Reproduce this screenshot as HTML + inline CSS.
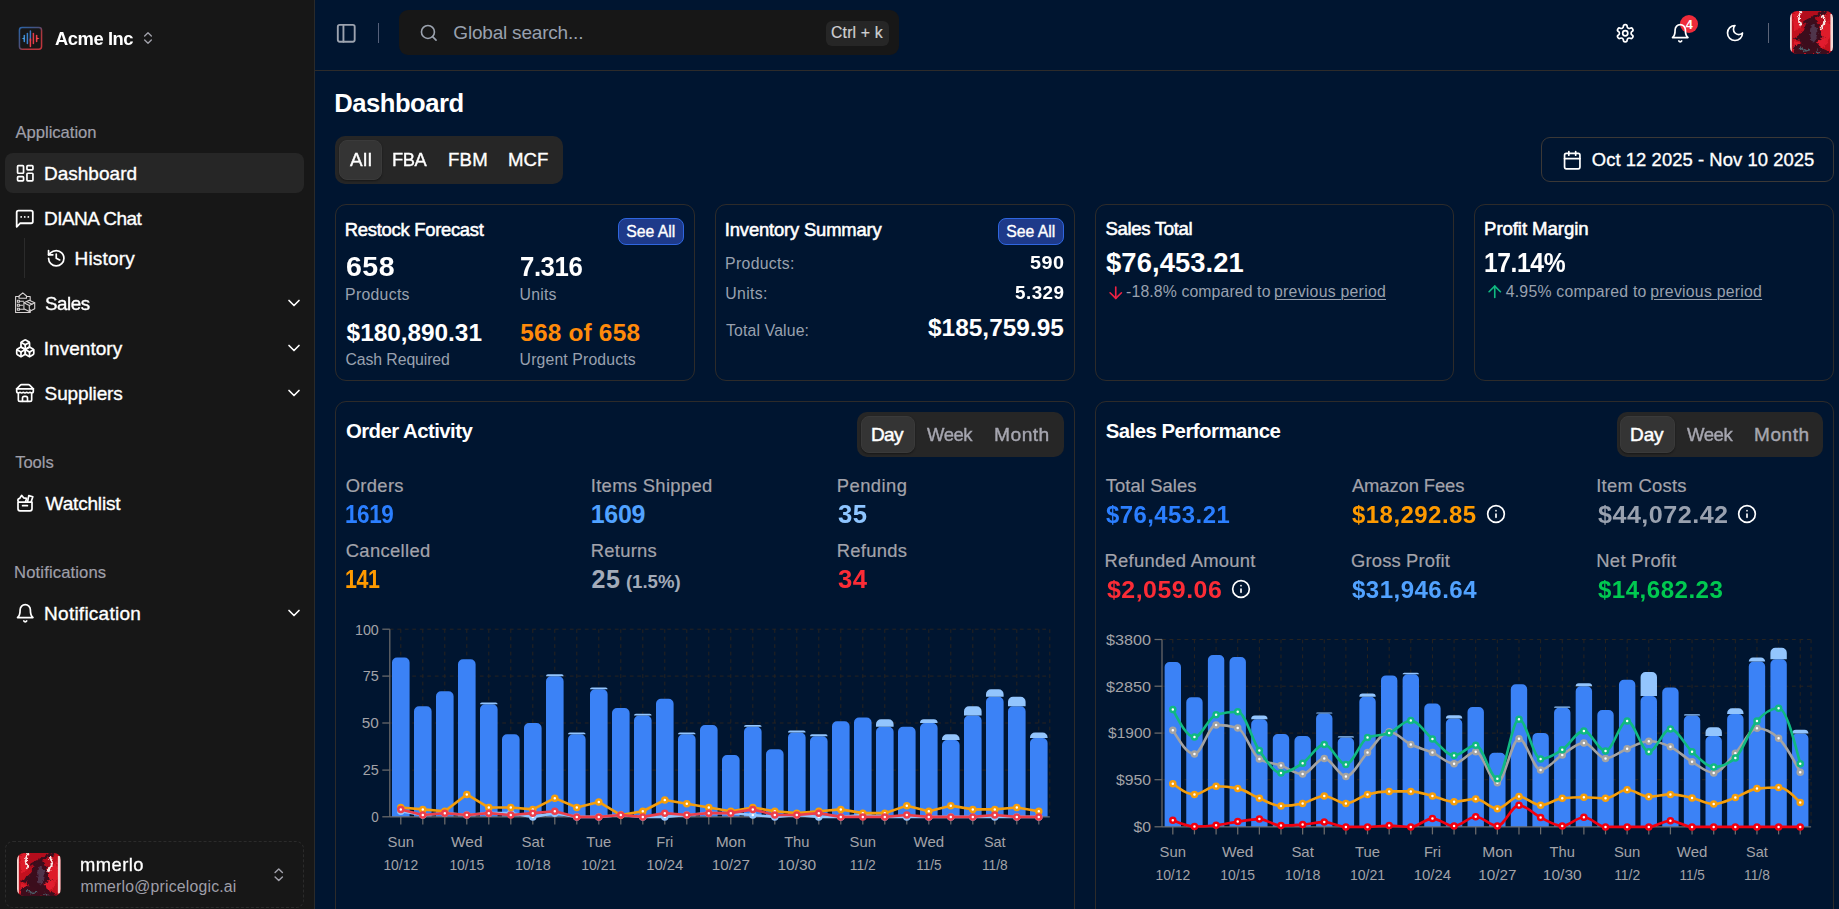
<!DOCTYPE html>
<html lang="en"><head><meta charset="utf-8"><title>Dashboard</title>
<style>
html,body{margin:0;padding:0}
body{width:1839px;height:909px;overflow:hidden;background:#001530;font-family:"Liberation Sans",sans-serif;position:relative}
.b,.t,.ic{position:absolute}
.t{white-space:pre;display:block}
.ic{display:block;overflow:hidden}
</style></head>
<body>
<div class="b" style="left:0px;top:0px;width:314px;height:909px;background:#171717;"></div>
<div class="b" style="left:314px;top:0px;width:1px;height:909px;background:#2a2a2a;"></div>
<div class="b" style="left:5px;top:153px;width:299px;height:40px;background:#262626;border-radius:8px;"></div>
<div class="b" style="left:24px;top:238px;width:1px;height:40px;background:#2b2b2b;"></div>
<div class="b" style="left:5px;top:841px;width:299px;height:67px;border:1px dashed #2b2b2b;border-radius:8px;box-sizing:border-box;"></div>
<div class="b" style="left:315px;top:70px;width:1524px;height:1px;background:#2d2b2a;"></div>
<div class="b" style="left:378px;top:23px;width:1px;height:20px;background:#55607a;"></div>
<div class="b" style="left:399px;top:10px;width:500px;height:45px;background:#171717;border-radius:9px;"></div>
<div class="b" style="left:826px;top:20.5px;width:63px;height:25.0px;background:#262626;border-radius:6px;"></div>
<div class="b" style="left:1768px;top:23px;width:1px;height:20px;background:#5b6478;"></div>
<div class="b" style="left:335px;top:136px;width:228px;height:48px;background:#262626;border-radius:10px;"></div>
<div class="b" style="left:339px;top:140px;width:43px;height:39.5px;background:#343434;border-radius:8px;box-shadow:0 1px 2px rgba(0,0,0,.4);border:1px solid #3a3a3a;box-sizing:border-box;"></div>
<div class="b" style="left:1541px;top:137px;width:293px;height:45px;border:1px solid #3b3836;border-radius:9px;box-sizing:border-box;"></div>
<div class="b" style="left:335px;top:204px;width:360px;height:177px;border:1px solid #2d2b2a;border-radius:11px;box-sizing:border-box;"></div>
<div class="b" style="left:715px;top:204px;width:360px;height:177px;border:1px solid #2d2b2a;border-radius:11px;box-sizing:border-box;"></div>
<div class="b" style="left:1095px;top:204px;width:359px;height:177px;border:1px solid #2d2b2a;border-radius:11px;box-sizing:border-box;"></div>
<div class="b" style="left:1474px;top:204px;width:360px;height:177px;border:1px solid #2d2b2a;border-radius:11px;box-sizing:border-box;"></div>
<div class="b" style="left:335px;top:401px;width:740px;height:529px;border:1px solid #2d2b2a;border-radius:11px;box-sizing:border-box;"></div>
<div class="b" style="left:1095px;top:401px;width:739px;height:529px;border:1px solid #2d2b2a;border-radius:11px;box-sizing:border-box;"></div>
<div class="b" style="left:618px;top:218.3px;width:66px;height:26.399999999999977px;background:#1e3a8a;border:1px solid #2f66e0;border-radius:8px;box-sizing:border-box;"></div>
<div class="b" style="left:998px;top:218.3px;width:66px;height:26.399999999999977px;background:#1e3a8a;border:1px solid #2f66e0;border-radius:8px;box-sizing:border-box;"></div>
<div class="b" style="left:857px;top:411.7px;width:207px;height:45.30000000000001px;background:#262626;border-radius:10px;"></div>
<div class="b" style="left:861.3px;top:416.3px;width:53.40000000000009px;height:36.39999999999998px;background:#343434;border-radius:8px;border:1px solid #3a3a3a;box-sizing:border-box;box-shadow:0 1px 2px rgba(0,0,0,.4);"></div>
<div class="b" style="left:1617px;top:411.7px;width:205.70000000000005px;height:45.30000000000001px;background:#262626;border-radius:10px;"></div>
<div class="b" style="left:1620.4px;top:416.3px;width:54.59999999999991px;height:36.39999999999998px;background:#343434;border-radius:8px;border:1px solid #3a3a3a;box-sizing:border-box;box-shadow:0 1px 2px rgba(0,0,0,.4);"></div>
<div class="b" style="left:1680.2px;top:15px;width:18.0px;height:18px;background:#ef2b3a;border-radius:9px;"></div>
<svg class="ic" style="left:0;top:0" width="1839" height="909" viewBox="0 0 1839 909">
<g stroke="#262320" stroke-width="1" stroke-dasharray="3.75 3.75"><line x1="389.8" x2="1049.8" y1="629.2" y2="629.2"/><line x1="389.8" x2="1049.8" y1="676.1" y2="676.1"/><line x1="389.8" x2="1049.8" y1="723.0" y2="723.0"/><line x1="389.8" x2="1049.8" y1="770.1" y2="770.1"/><line x1="400.80" x2="400.80" y1="629.2" y2="816.9"/><line x1="422.80" x2="422.80" y1="629.2" y2="816.9"/><line x1="444.80" x2="444.80" y1="629.2" y2="816.9"/><line x1="466.80" x2="466.80" y1="629.2" y2="816.9"/><line x1="488.80" x2="488.80" y1="629.2" y2="816.9"/><line x1="510.80" x2="510.80" y1="629.2" y2="816.9"/><line x1="532.80" x2="532.80" y1="629.2" y2="816.9"/><line x1="554.80" x2="554.80" y1="629.2" y2="816.9"/><line x1="576.80" x2="576.80" y1="629.2" y2="816.9"/><line x1="598.80" x2="598.80" y1="629.2" y2="816.9"/><line x1="620.80" x2="620.80" y1="629.2" y2="816.9"/><line x1="642.80" x2="642.80" y1="629.2" y2="816.9"/><line x1="664.80" x2="664.80" y1="629.2" y2="816.9"/><line x1="686.80" x2="686.80" y1="629.2" y2="816.9"/><line x1="708.80" x2="708.80" y1="629.2" y2="816.9"/><line x1="730.80" x2="730.80" y1="629.2" y2="816.9"/><line x1="752.80" x2="752.80" y1="629.2" y2="816.9"/><line x1="774.80" x2="774.80" y1="629.2" y2="816.9"/><line x1="796.80" x2="796.80" y1="629.2" y2="816.9"/><line x1="818.80" x2="818.80" y1="629.2" y2="816.9"/><line x1="840.80" x2="840.80" y1="629.2" y2="816.9"/><line x1="862.80" x2="862.80" y1="629.2" y2="816.9"/><line x1="884.80" x2="884.80" y1="629.2" y2="816.9"/><line x1="906.80" x2="906.80" y1="629.2" y2="816.9"/><line x1="928.80" x2="928.80" y1="629.2" y2="816.9"/><line x1="950.80" x2="950.80" y1="629.2" y2="816.9"/><line x1="972.80" x2="972.80" y1="629.2" y2="816.9"/><line x1="994.80" x2="994.80" y1="629.2" y2="816.9"/><line x1="1016.80" x2="1016.80" y1="629.2" y2="816.9"/><line x1="1038.80" x2="1038.80" y1="629.2" y2="816.9"/><line x1="1049.80" x2="1049.80" y1="629.2" y2="816.9"/></g>
<path fill="#3b82f6" d="M392.00,816.90V662.44A5.00,5.00 0 0 1 397.00,657.44H404.60A5.00,5.00 0 0 1 409.60,662.44V816.90ZM414.00,816.90V711.22A5.00,5.00 0 0 1 419.00,706.22H426.60A5.00,5.00 0 0 1 431.60,711.22V816.90ZM436.00,816.90V696.21A5.00,5.00 0 0 1 441.00,691.21H448.60A5.00,5.00 0 0 1 453.60,696.21V816.90ZM458.00,816.90V664.32A5.00,5.00 0 0 1 463.00,659.32H470.60A5.00,5.00 0 0 1 475.60,664.32V816.90ZM480.00,816.90V709.34A5.00,5.00 0 0 1 485.00,704.34H492.60A5.00,5.00 0 0 1 497.60,709.34V816.90ZM502.00,816.90V739.36A5.00,5.00 0 0 1 507.00,734.36H514.60A5.00,5.00 0 0 1 519.60,739.36V816.90ZM524.00,816.90V728.10A5.00,5.00 0 0 1 529.00,723.10H536.60A5.00,5.00 0 0 1 541.60,728.10V816.90ZM546.00,816.90V681.20A5.00,5.00 0 0 1 551.00,676.20H558.60A5.00,5.00 0 0 1 563.60,681.20V816.90ZM568.00,816.90V739.36A5.00,5.00 0 0 1 573.00,734.36H580.60A5.00,5.00 0 0 1 585.60,739.36V816.90ZM590.00,816.90V694.33A5.00,5.00 0 0 1 595.00,689.33H602.60A5.00,5.00 0 0 1 607.60,694.33V816.90ZM612.00,816.90V713.09A5.00,5.00 0 0 1 617.00,708.09H624.60A5.00,5.00 0 0 1 629.60,713.09V816.90ZM634.00,816.90V720.60A5.00,5.00 0 0 1 639.00,715.60H646.60A5.00,5.00 0 0 1 651.60,720.60V816.90ZM656.00,816.90V703.71A5.00,5.00 0 0 1 661.00,698.71H668.60A5.00,5.00 0 0 1 673.60,703.71V816.90ZM678.00,816.90V739.36A5.00,5.00 0 0 1 683.00,734.36H690.60A5.00,5.00 0 0 1 695.60,739.36V816.90ZM700.00,816.90V729.98A5.00,5.00 0 0 1 705.00,724.98H712.60A5.00,5.00 0 0 1 717.60,729.98V816.90ZM722.00,816.90V759.99A5.00,5.00 0 0 1 727.00,754.99H734.60A5.00,5.00 0 0 1 739.60,759.99V816.90ZM744.00,816.90V731.85A5.00,5.00 0 0 1 749.00,726.85H756.60A5.00,5.00 0 0 1 761.60,731.85V816.90ZM766.00,816.90V754.36A5.00,5.00 0 0 1 771.00,749.36H778.60A5.00,5.00 0 0 1 783.60,754.36V816.90ZM788.00,816.90V737.48A5.00,5.00 0 0 1 793.00,732.48H800.60A5.00,5.00 0 0 1 805.60,737.48V816.90ZM810.00,816.90V741.23A5.00,5.00 0 0 1 815.00,736.23H822.60A5.00,5.00 0 0 1 827.60,741.23V816.90ZM832.00,816.90V726.22A5.00,5.00 0 0 1 837.00,721.22H844.60A5.00,5.00 0 0 1 849.60,726.22V816.90ZM854.00,816.90V722.47A5.00,5.00 0 0 1 859.00,717.47H866.60A5.00,5.00 0 0 1 871.60,722.47V816.90ZM876.00,816.90V731.85A5.00,5.00 0 0 1 881.00,726.85H888.60A5.00,5.00 0 0 1 893.60,731.85V816.90ZM898.00,816.90V731.85A5.00,5.00 0 0 1 903.00,726.85H910.60A5.00,5.00 0 0 1 915.60,731.85V816.90ZM920.00,816.90V728.10A5.00,5.00 0 0 1 925.00,723.10H932.60A5.00,5.00 0 0 1 937.60,728.10V816.90ZM942.00,816.90V744.98A5.00,5.00 0 0 1 947.00,739.98H954.60A5.00,5.00 0 0 1 959.60,744.98V816.90ZM964.00,816.90V720.60A5.00,5.00 0 0 1 969.00,715.60H976.60A5.00,5.00 0 0 1 981.60,720.60V816.90ZM986.00,816.90V701.84A5.00,5.00 0 0 1 991.00,696.84H998.60A5.00,5.00 0 0 1 1003.60,701.84V816.90ZM1008.00,816.90V711.22A5.00,5.00 0 0 1 1013.00,706.22H1020.60A5.00,5.00 0 0 1 1025.60,711.22V816.90ZM1030.00,816.90V743.11A5.00,5.00 0 0 1 1035.00,738.11H1042.60A5.00,5.00 0 0 1 1047.60,743.11V816.90Z"/>
<path fill="#93c5fd" d="M480.00,704.34V704.34A1.88,1.88 0 0 1 481.88,702.46H495.72A1.88,1.88 0 0 1 497.60,704.34V704.34ZM546.00,676.20V676.20A1.88,1.88 0 0 1 547.88,674.32H561.72A1.88,1.88 0 0 1 563.60,676.20V676.20ZM568.00,734.36V734.36A1.88,1.88 0 0 1 569.88,732.48H583.72A1.88,1.88 0 0 1 585.60,734.36V734.36ZM590.00,689.33V689.33A1.88,1.88 0 0 1 591.88,687.46H605.72A1.88,1.88 0 0 1 607.60,689.33V689.33ZM634.00,715.60V715.60A1.88,1.88 0 0 1 635.88,713.72H649.72A1.88,1.88 0 0 1 651.60,715.60V715.60ZM678.00,734.36V734.36A1.88,1.88 0 0 1 679.88,732.48H693.72A1.88,1.88 0 0 1 695.60,734.36V734.36ZM744.00,726.85V726.85A1.88,1.88 0 0 1 745.88,724.98H759.72A1.88,1.88 0 0 1 761.60,726.85V726.85ZM788.00,732.48V732.48A1.88,1.88 0 0 1 789.88,730.60H803.72A1.88,1.88 0 0 1 805.60,732.48V732.48ZM810.00,736.23V736.23A1.88,1.88 0 0 1 811.88,734.36H825.72A1.88,1.88 0 0 1 827.60,736.23V736.23ZM876.00,726.85V724.35A5.00,5.00 0 0 1 881.00,719.35H888.60A5.00,5.00 0 0 1 893.60,724.35V726.85ZM920.00,723.10V723.10A3.75,3.75 0 0 1 923.75,719.35H933.85A3.75,3.75 0 0 1 937.60,723.10V723.10ZM942.00,739.98V739.36A5.00,5.00 0 0 1 947.00,734.36H954.60A5.00,5.00 0 0 1 959.60,739.36V739.98ZM964.00,715.60V711.22A5.00,5.00 0 0 1 969.00,706.22H976.60A5.00,5.00 0 0 1 981.60,711.22V715.60ZM986.00,696.84V694.33A5.00,5.00 0 0 1 991.00,689.33H998.60A5.00,5.00 0 0 1 1003.60,694.33V696.84ZM1008.00,706.22V701.84A5.00,5.00 0 0 1 1013.00,696.84H1020.60A5.00,5.00 0 0 1 1025.60,701.84V706.22ZM1030.00,738.11V737.48A5.00,5.00 0 0 1 1035.00,732.48H1042.60A5.00,5.00 0 0 1 1047.60,737.48V738.11Z"/>
<g stroke="#6b6b6b" stroke-width="1.25"><line x1="389.8" x2="1049.8" y1="816.9" y2="816.9"/><line x1="389.8" x2="389.8" y1="629.2" y2="816.9"/><line x1="382.3" x2="389.8" y1="629.2" y2="629.2"/><line x1="382.3" x2="389.8" y1="676.1" y2="676.1"/><line x1="382.3" x2="389.8" y1="723.0" y2="723.0"/><line x1="382.3" x2="389.8" y1="770.1" y2="770.1"/><line x1="382.3" x2="389.8" y1="816.8" y2="816.8"/><line x1="400.80" x2="400.80" y1="816.9" y2="824.4"/><line x1="422.80" x2="422.80" y1="816.9" y2="824.4"/><line x1="444.80" x2="444.80" y1="816.9" y2="824.4"/><line x1="466.80" x2="466.80" y1="816.9" y2="824.4"/><line x1="488.80" x2="488.80" y1="816.9" y2="824.4"/><line x1="510.80" x2="510.80" y1="816.9" y2="824.4"/><line x1="532.80" x2="532.80" y1="816.9" y2="824.4"/><line x1="554.80" x2="554.80" y1="816.9" y2="824.4"/><line x1="576.80" x2="576.80" y1="816.9" y2="824.4"/><line x1="598.80" x2="598.80" y1="816.9" y2="824.4"/><line x1="620.80" x2="620.80" y1="816.9" y2="824.4"/><line x1="642.80" x2="642.80" y1="816.9" y2="824.4"/><line x1="664.80" x2="664.80" y1="816.9" y2="824.4"/><line x1="686.80" x2="686.80" y1="816.9" y2="824.4"/><line x1="708.80" x2="708.80" y1="816.9" y2="824.4"/><line x1="730.80" x2="730.80" y1="816.9" y2="824.4"/><line x1="752.80" x2="752.80" y1="816.9" y2="824.4"/><line x1="774.80" x2="774.80" y1="816.9" y2="824.4"/><line x1="796.80" x2="796.80" y1="816.9" y2="824.4"/><line x1="818.80" x2="818.80" y1="816.9" y2="824.4"/><line x1="840.80" x2="840.80" y1="816.9" y2="824.4"/><line x1="862.80" x2="862.80" y1="816.9" y2="824.4"/><line x1="884.80" x2="884.80" y1="816.9" y2="824.4"/><line x1="906.80" x2="906.80" y1="816.9" y2="824.4"/><line x1="928.80" x2="928.80" y1="816.9" y2="824.4"/><line x1="950.80" x2="950.80" y1="816.9" y2="824.4"/><line x1="972.80" x2="972.80" y1="816.9" y2="824.4"/><line x1="994.80" x2="994.80" y1="816.9" y2="824.4"/><line x1="1016.80" x2="1016.80" y1="816.9" y2="824.4"/><line x1="1038.80" x2="1038.80" y1="816.9" y2="824.4"/></g>
<path d="M400.80,811.27L422.80,815.02L444.80,813.15L466.80,815.02L488.80,813.15L510.80,813.15L532.80,816.90L554.80,813.15L576.80,816.90L598.80,816.90L620.80,815.02L642.80,816.90L664.80,816.90L686.80,815.02L708.80,813.15L730.80,813.15L752.80,815.02L774.80,816.90L796.80,815.02L818.80,816.90L840.80,816.90L862.80,815.02L884.80,816.90L906.80,816.90L928.80,816.90L950.80,816.90L972.80,816.90L994.80,816.90L1016.80,816.90L1038.80,816.90" fill="none" stroke="#93c5fd" stroke-width="2.6" stroke-linejoin="round" stroke-linecap="round"/>
<g fill="#fff" stroke="#93c5fd" stroke-width="2.5"><circle cx="400.80" cy="811.27" r="2.5"/><circle cx="422.80" cy="815.02" r="2.5"/><circle cx="444.80" cy="813.15" r="2.5"/><circle cx="466.80" cy="815.02" r="2.5"/><circle cx="488.80" cy="813.15" r="2.5"/><circle cx="510.80" cy="813.15" r="2.5"/><circle cx="532.80" cy="816.90" r="2.5"/><circle cx="554.80" cy="813.15" r="2.5"/><circle cx="576.80" cy="816.90" r="2.5"/><circle cx="598.80" cy="816.90" r="2.5"/><circle cx="620.80" cy="815.02" r="2.5"/><circle cx="642.80" cy="816.90" r="2.5"/><circle cx="664.80" cy="816.90" r="2.5"/><circle cx="686.80" cy="815.02" r="2.5"/><circle cx="708.80" cy="813.15" r="2.5"/><circle cx="730.80" cy="813.15" r="2.5"/><circle cx="752.80" cy="815.02" r="2.5"/><circle cx="774.80" cy="816.90" r="2.5"/><circle cx="796.80" cy="815.02" r="2.5"/><circle cx="818.80" cy="816.90" r="2.5"/><circle cx="840.80" cy="816.90" r="2.5"/><circle cx="862.80" cy="815.02" r="2.5"/><circle cx="884.80" cy="816.90" r="2.5"/><circle cx="906.80" cy="816.90" r="2.5"/><circle cx="928.80" cy="816.90" r="2.5"/><circle cx="950.80" cy="816.90" r="2.5"/><circle cx="972.80" cy="816.90" r="2.5"/><circle cx="994.80" cy="816.90" r="2.5"/><circle cx="1016.80" cy="816.90" r="2.5"/><circle cx="1038.80" cy="816.90" r="2.5"/></g>
<path d="M400.80,807.52L422.80,809.40L444.80,811.27L466.80,794.39L488.80,807.52L510.80,807.52L532.80,809.40L554.80,798.14L576.80,807.52L598.80,801.89L620.80,815.02L642.80,811.27L664.80,800.02L686.80,803.77L708.80,807.52L730.80,811.27L752.80,807.52L774.80,811.27L796.80,813.15L818.80,811.27L840.80,809.40L862.80,813.15L884.80,813.15L906.80,805.64L928.80,811.27L950.80,805.64L972.80,809.40L994.80,809.40L1016.80,807.52L1038.80,811.27" fill="none" stroke="#f59e0b" stroke-width="2.6" stroke-linejoin="round" stroke-linecap="round"/>
<g fill="#fff" stroke="#f59e0b" stroke-width="2.5"><circle cx="400.80" cy="807.52" r="2.5"/><circle cx="422.80" cy="809.40" r="2.5"/><circle cx="444.80" cy="811.27" r="2.5"/><circle cx="466.80" cy="794.39" r="2.5"/><circle cx="488.80" cy="807.52" r="2.5"/><circle cx="510.80" cy="807.52" r="2.5"/><circle cx="532.80" cy="809.40" r="2.5"/><circle cx="554.80" cy="798.14" r="2.5"/><circle cx="576.80" cy="807.52" r="2.5"/><circle cx="598.80" cy="801.89" r="2.5"/><circle cx="620.80" cy="815.02" r="2.5"/><circle cx="642.80" cy="811.27" r="2.5"/><circle cx="664.80" cy="800.02" r="2.5"/><circle cx="686.80" cy="803.77" r="2.5"/><circle cx="708.80" cy="807.52" r="2.5"/><circle cx="730.80" cy="811.27" r="2.5"/><circle cx="752.80" cy="807.52" r="2.5"/><circle cx="774.80" cy="811.27" r="2.5"/><circle cx="796.80" cy="813.15" r="2.5"/><circle cx="818.80" cy="811.27" r="2.5"/><circle cx="840.80" cy="809.40" r="2.5"/><circle cx="862.80" cy="813.15" r="2.5"/><circle cx="884.80" cy="813.15" r="2.5"/><circle cx="906.80" cy="805.64" r="2.5"/><circle cx="928.80" cy="811.27" r="2.5"/><circle cx="950.80" cy="805.64" r="2.5"/><circle cx="972.80" cy="809.40" r="2.5"/><circle cx="994.80" cy="809.40" r="2.5"/><circle cx="1016.80" cy="807.52" r="2.5"/><circle cx="1038.80" cy="811.27" r="2.5"/></g>
<path d="M400.80,809.40L422.80,815.02L444.80,813.15L466.80,815.02L488.80,813.15L510.80,815.02L532.80,813.15L554.80,811.27L576.80,816.90L598.80,816.90L620.80,815.02L642.80,816.90L664.80,813.15L686.80,815.02L708.80,813.15L730.80,813.15L752.80,809.40L774.80,815.02L796.80,815.02L818.80,813.15L840.80,816.90L862.80,816.90L884.80,816.90L906.80,815.02L928.80,816.90L950.80,816.90L972.80,816.90L994.80,815.02L1016.80,816.90L1038.80,816.90" fill="none" stroke="#ec3f4c" stroke-width="2.6" stroke-linejoin="round" stroke-linecap="round"/>
<g fill="#fff" stroke="#ec3f4c" stroke-width="2.5"><circle cx="400.80" cy="809.40" r="2.5"/><circle cx="422.80" cy="815.02" r="2.5"/><circle cx="444.80" cy="813.15" r="2.5"/><circle cx="466.80" cy="815.02" r="2.5"/><circle cx="488.80" cy="813.15" r="2.5"/><circle cx="510.80" cy="815.02" r="2.5"/><circle cx="532.80" cy="813.15" r="2.5"/><circle cx="554.80" cy="811.27" r="2.5"/><circle cx="576.80" cy="816.90" r="2.5"/><circle cx="598.80" cy="816.90" r="2.5"/><circle cx="620.80" cy="815.02" r="2.5"/><circle cx="642.80" cy="816.90" r="2.5"/><circle cx="664.80" cy="813.15" r="2.5"/><circle cx="686.80" cy="815.02" r="2.5"/><circle cx="708.80" cy="813.15" r="2.5"/><circle cx="730.80" cy="813.15" r="2.5"/><circle cx="752.80" cy="809.40" r="2.5"/><circle cx="774.80" cy="815.02" r="2.5"/><circle cx="796.80" cy="815.02" r="2.5"/><circle cx="818.80" cy="813.15" r="2.5"/><circle cx="840.80" cy="816.90" r="2.5"/><circle cx="862.80" cy="816.90" r="2.5"/><circle cx="884.80" cy="816.90" r="2.5"/><circle cx="906.80" cy="815.02" r="2.5"/><circle cx="928.80" cy="816.90" r="2.5"/><circle cx="950.80" cy="816.90" r="2.5"/><circle cx="972.80" cy="816.90" r="2.5"/><circle cx="994.80" cy="815.02" r="2.5"/><circle cx="1016.80" cy="816.90" r="2.5"/><circle cx="1038.80" cy="816.90" r="2.5"/></g>
<g fill="#a3a3a8" font-size="15" font-family="Liberation Sans, sans-serif"><text x="378.8" y="634.5" text-anchor="end" textLength="23.8" lengthAdjust="spacingAndGlyphs">100</text><text x="378.8" y="681.4" text-anchor="end" textLength="16" lengthAdjust="spacingAndGlyphs">75</text><text x="378.8" y="728.3" text-anchor="end" textLength="17" lengthAdjust="spacingAndGlyphs">50</text><text x="378.8" y="775.4" text-anchor="end" textLength="16" lengthAdjust="spacingAndGlyphs">25</text><text x="378.8" y="822.1" text-anchor="end" textLength="7.5" lengthAdjust="spacingAndGlyphs">0</text><text x="400.80" y="847.2" text-anchor="middle" textLength="26.4" lengthAdjust="spacingAndGlyphs">Sun</text><text x="400.80" y="869.7" text-anchor="middle" textLength="34.8" lengthAdjust="spacingAndGlyphs">10/12</text><text x="466.80" y="847.2" text-anchor="middle" textLength="31.5" lengthAdjust="spacingAndGlyphs">Wed</text><text x="466.80" y="869.7" text-anchor="middle" textLength="34.8" lengthAdjust="spacingAndGlyphs">10/15</text><text x="532.80" y="847.2" text-anchor="middle" textLength="22.5" lengthAdjust="spacingAndGlyphs">Sat</text><text x="532.80" y="869.7" text-anchor="middle" textLength="35.8" lengthAdjust="spacingAndGlyphs">10/18</text><text x="598.80" y="847.2" text-anchor="middle" textLength="25" lengthAdjust="spacingAndGlyphs">Tue</text><text x="598.80" y="869.7" text-anchor="middle" textLength="35.2" lengthAdjust="spacingAndGlyphs">10/21</text><text x="664.80" y="847.2" text-anchor="middle" textLength="17" lengthAdjust="spacingAndGlyphs">Fri</text><text x="664.80" y="869.7" text-anchor="middle" textLength="37.2" lengthAdjust="spacingAndGlyphs">10/24</text><text x="730.80" y="847.2" text-anchor="middle" textLength="30.3" lengthAdjust="spacingAndGlyphs">Mon</text><text x="730.80" y="869.7" text-anchor="middle" textLength="38.2" lengthAdjust="spacingAndGlyphs">10/27</text><text x="796.80" y="847.2" text-anchor="middle" textLength="25.3" lengthAdjust="spacingAndGlyphs">Thu</text><text x="796.80" y="869.7" text-anchor="middle" textLength="38.8" lengthAdjust="spacingAndGlyphs">10/30</text><text x="862.80" y="847.2" text-anchor="middle" textLength="26.4" lengthAdjust="spacingAndGlyphs">Sun</text><text x="862.80" y="869.7" text-anchor="middle" textLength="26" lengthAdjust="spacingAndGlyphs">11/2</text><text x="928.80" y="847.2" text-anchor="middle" textLength="30.6" lengthAdjust="spacingAndGlyphs">Wed</text><text x="928.80" y="869.7" text-anchor="middle" textLength="25.3" lengthAdjust="spacingAndGlyphs">11/5</text><text x="994.80" y="847.2" text-anchor="middle" textLength="21.7" lengthAdjust="spacingAndGlyphs">Sat</text><text x="994.80" y="869.7" text-anchor="middle" textLength="25.7" lengthAdjust="spacingAndGlyphs">11/8</text></g>
<g stroke="#262320" stroke-width="1" stroke-dasharray="3.75 3.75"><line x1="1162.0" x2="1811.1" y1="639.5" y2="639.5"/><line x1="1162.0" x2="1811.1" y1="686.2" y2="686.2"/><line x1="1162.0" x2="1811.1" y1="733.1" y2="733.1"/><line x1="1162.0" x2="1811.1" y1="779.7" y2="779.7"/><line x1="1172.82" x2="1172.82" y1="639.5" y2="826.9"/><line x1="1194.45" x2="1194.45" y1="639.5" y2="826.9"/><line x1="1216.09" x2="1216.09" y1="639.5" y2="826.9"/><line x1="1237.72" x2="1237.72" y1="639.5" y2="826.9"/><line x1="1259.36" x2="1259.36" y1="639.5" y2="826.9"/><line x1="1280.99" x2="1280.99" y1="639.5" y2="826.9"/><line x1="1302.63" x2="1302.63" y1="639.5" y2="826.9"/><line x1="1324.26" x2="1324.26" y1="639.5" y2="826.9"/><line x1="1345.90" x2="1345.90" y1="639.5" y2="826.9"/><line x1="1367.53" x2="1367.53" y1="639.5" y2="826.9"/><line x1="1389.17" x2="1389.17" y1="639.5" y2="826.9"/><line x1="1410.80" x2="1410.80" y1="639.5" y2="826.9"/><line x1="1432.44" x2="1432.44" y1="639.5" y2="826.9"/><line x1="1454.07" x2="1454.07" y1="639.5" y2="826.9"/><line x1="1475.71" x2="1475.71" y1="639.5" y2="826.9"/><line x1="1497.34" x2="1497.34" y1="639.5" y2="826.9"/><line x1="1518.98" x2="1518.98" y1="639.5" y2="826.9"/><line x1="1540.61" x2="1540.61" y1="639.5" y2="826.9"/><line x1="1562.25" x2="1562.25" y1="639.5" y2="826.9"/><line x1="1583.88" x2="1583.88" y1="639.5" y2="826.9"/><line x1="1605.52" x2="1605.52" y1="639.5" y2="826.9"/><line x1="1627.15" x2="1627.15" y1="639.5" y2="826.9"/><line x1="1648.79" x2="1648.79" y1="639.5" y2="826.9"/><line x1="1670.42" x2="1670.42" y1="639.5" y2="826.9"/><line x1="1692.06" x2="1692.06" y1="639.5" y2="826.9"/><line x1="1713.69" x2="1713.69" y1="639.5" y2="826.9"/><line x1="1735.33" x2="1735.33" y1="639.5" y2="826.9"/><line x1="1756.96" x2="1756.96" y1="639.5" y2="826.9"/><line x1="1778.60" x2="1778.60" y1="639.5" y2="826.9"/><line x1="1800.23" x2="1800.23" y1="639.5" y2="826.9"/><line x1="1811.05" x2="1811.05" y1="639.5" y2="826.9"/></g>
<path fill="#3b82f6" d="M1164.63,826.90V667.10A5.00,5.00 0 0 1 1169.63,662.10H1176.01A5.00,5.00 0 0 1 1181.01,667.10V826.90ZM1186.26,826.90V702.20A5.00,5.00 0 0 1 1191.26,697.20H1197.64A5.00,5.00 0 0 1 1202.64,702.20V826.90ZM1207.90,826.90V660.10A5.00,5.00 0 0 1 1212.90,655.10H1219.28A5.00,5.00 0 0 1 1224.28,660.10V826.90ZM1229.53,826.90V662.00A5.00,5.00 0 0 1 1234.53,657.00H1240.91A5.00,5.00 0 0 1 1245.91,662.00V826.90ZM1251.17,826.90V724.30A5.00,5.00 0 0 1 1256.17,719.30H1262.55A5.00,5.00 0 0 1 1267.55,724.30V826.90ZM1272.80,826.90V739.10A5.00,5.00 0 0 1 1277.80,734.10H1284.18A5.00,5.00 0 0 1 1289.18,739.10V826.90ZM1294.44,826.90V741.00A5.00,5.00 0 0 1 1299.44,736.00H1305.82A5.00,5.00 0 0 1 1310.82,741.00V826.90ZM1316.07,826.90V718.60A5.00,5.00 0 0 1 1321.07,713.60H1327.45A5.00,5.00 0 0 1 1332.45,718.60V826.90ZM1337.71,826.90V742.60A5.00,5.00 0 0 1 1342.71,737.60H1349.09A5.00,5.00 0 0 1 1354.09,742.60V826.90ZM1359.34,826.90V701.70A5.00,5.00 0 0 1 1364.34,696.70H1370.72A5.00,5.00 0 0 1 1375.72,701.70V826.90ZM1380.98,826.90V680.40A5.00,5.00 0 0 1 1385.98,675.40H1392.36A5.00,5.00 0 0 1 1397.36,680.40V826.90ZM1402.61,826.90V679.30A5.00,5.00 0 0 1 1407.61,674.30H1413.99A5.00,5.00 0 0 1 1418.99,679.30V826.90ZM1424.25,826.90V708.60A5.00,5.00 0 0 1 1429.25,703.60H1435.63A5.00,5.00 0 0 1 1440.63,708.60V826.90ZM1445.88,826.90V723.60A5.00,5.00 0 0 1 1450.88,718.60H1457.26A5.00,5.00 0 0 1 1462.26,723.60V826.90ZM1467.52,826.90V712.10A5.00,5.00 0 0 1 1472.52,707.10H1478.90A5.00,5.00 0 0 1 1483.90,712.10V826.90ZM1489.15,826.90V757.80A5.00,5.00 0 0 1 1494.15,752.80H1500.53A5.00,5.00 0 0 1 1505.53,757.80V826.90ZM1510.79,826.90V689.20A5.00,5.00 0 0 1 1515.79,684.20H1522.17A5.00,5.00 0 0 1 1527.17,689.20V826.90ZM1532.42,826.90V737.90A5.00,5.00 0 0 1 1537.42,732.90H1543.80A5.00,5.00 0 0 1 1548.80,737.90V826.90ZM1554.06,826.90V712.80A5.00,5.00 0 0 1 1559.06,707.80H1565.44A5.00,5.00 0 0 1 1570.44,712.80V826.90ZM1575.69,826.90V691.30A5.00,5.00 0 0 1 1580.69,686.30H1587.07A5.00,5.00 0 0 1 1592.07,691.30V826.90ZM1597.33,826.90V715.10A5.00,5.00 0 0 1 1602.33,710.10H1608.71A5.00,5.00 0 0 1 1613.71,715.10V826.90ZM1618.96,826.90V684.80A5.00,5.00 0 0 1 1623.96,679.80H1630.34A5.00,5.00 0 0 1 1635.34,684.80V826.90ZM1640.60,826.90V701.00A5.00,5.00 0 0 1 1645.60,696.00H1651.98A5.00,5.00 0 0 1 1656.98,701.00V826.90ZM1662.23,826.90V692.50A5.00,5.00 0 0 1 1667.23,687.50H1673.61A5.00,5.00 0 0 1 1678.61,692.50V826.90ZM1683.87,826.90V720.60A5.00,5.00 0 0 1 1688.87,715.60H1695.25A5.00,5.00 0 0 1 1700.25,720.60V826.90ZM1705.50,826.90V741.00A5.00,5.00 0 0 1 1710.50,736.00H1716.88A5.00,5.00 0 0 1 1721.88,741.00V826.90ZM1727.14,826.90V719.00A5.00,5.00 0 0 1 1732.14,714.00H1738.52A5.00,5.00 0 0 1 1743.52,719.00V826.90ZM1748.77,826.90V666.60A5.00,5.00 0 0 1 1753.77,661.60H1760.15A5.00,5.00 0 0 1 1765.15,666.60V826.90ZM1770.41,826.90V664.30A5.00,5.00 0 0 1 1775.41,659.30H1781.79A5.00,5.00 0 0 1 1786.79,664.30V826.90ZM1792.04,826.90V738.60A5.00,5.00 0 0 1 1797.04,733.60H1803.42A5.00,5.00 0 0 1 1808.42,738.60V826.90Z"/>
<path fill="#93c5fd" d="M1251.17,719.30V719.30A3.70,3.70 0 0 1 1254.87,715.60H1263.85A3.70,3.70 0 0 1 1267.55,719.30V719.30ZM1316.07,713.60V713.60A1.20,1.20 0 0 1 1317.27,712.40H1331.25A1.20,1.20 0 0 1 1332.45,713.60V713.60ZM1337.71,737.60V737.60A1.40,1.40 0 0 1 1339.11,736.20H1352.69A1.40,1.40 0 0 1 1354.09,737.60V737.60ZM1359.34,696.70V696.70A3.20,3.20 0 0 1 1362.54,693.50H1372.52A3.20,3.20 0 0 1 1375.72,696.70V696.70ZM1402.61,674.30V674.30A1.60,1.60 0 0 1 1404.21,672.70H1417.39A1.60,1.60 0 0 1 1418.99,674.30V674.30ZM1445.88,718.60V718.60A3.40,3.40 0 0 1 1449.28,715.20H1458.86A3.40,3.40 0 0 1 1462.26,718.60V718.60ZM1554.06,707.80V707.80A1.40,1.40 0 0 1 1555.46,706.40H1569.04A1.40,1.40 0 0 1 1570.44,707.80V707.80ZM1575.69,686.30V686.30A3.00,3.00 0 0 1 1578.69,683.30H1589.07A3.00,3.00 0 0 1 1592.07,686.30V686.30ZM1640.60,696.00V677.00A5.00,5.00 0 0 1 1645.60,672.00H1651.98A5.00,5.00 0 0 1 1656.98,677.00V696.00ZM1683.87,715.60V715.60A1.40,1.40 0 0 1 1685.27,714.20H1698.85A1.40,1.40 0 0 1 1700.25,715.60V715.60ZM1705.50,736.00V732.20A5.00,5.00 0 0 1 1710.50,727.20H1716.88A5.00,5.00 0 0 1 1721.88,732.20V736.00ZM1727.14,714.00V713.20A5.00,5.00 0 0 1 1732.14,708.20H1738.52A5.00,5.00 0 0 1 1743.52,713.20V714.00ZM1748.77,661.60V661.60A4.20,4.20 0 0 1 1752.97,657.40H1760.95A4.20,4.20 0 0 1 1765.15,661.60V661.60ZM1770.41,659.30V652.70A5.00,5.00 0 0 1 1775.41,647.70H1781.79A5.00,5.00 0 0 1 1786.79,652.70V659.30ZM1792.04,733.60V733.60A3.90,3.90 0 0 1 1795.94,729.70H1804.52A3.90,3.90 0 0 1 1808.42,733.60V733.60Z"/>
<g stroke="#6b6b6b" stroke-width="1.25"><line x1="1162.0" x2="1811.1" y1="826.9" y2="826.9"/><line x1="1162.0" x2="1162.0" y1="639.5" y2="826.9"/><line x1="1154.5" x2="1162.0" y1="639.5" y2="639.5"/><line x1="1154.5" x2="1162.0" y1="686.2" y2="686.2"/><line x1="1154.5" x2="1162.0" y1="733.1" y2="733.1"/><line x1="1154.5" x2="1162.0" y1="779.7" y2="779.7"/><line x1="1154.5" x2="1162.0" y1="826.8" y2="826.8"/><line x1="1172.82" x2="1172.82" y1="826.9" y2="834.4"/><line x1="1194.45" x2="1194.45" y1="826.9" y2="834.4"/><line x1="1216.09" x2="1216.09" y1="826.9" y2="834.4"/><line x1="1237.72" x2="1237.72" y1="826.9" y2="834.4"/><line x1="1259.36" x2="1259.36" y1="826.9" y2="834.4"/><line x1="1280.99" x2="1280.99" y1="826.9" y2="834.4"/><line x1="1302.63" x2="1302.63" y1="826.9" y2="834.4"/><line x1="1324.26" x2="1324.26" y1="826.9" y2="834.4"/><line x1="1345.90" x2="1345.90" y1="826.9" y2="834.4"/><line x1="1367.53" x2="1367.53" y1="826.9" y2="834.4"/><line x1="1389.17" x2="1389.17" y1="826.9" y2="834.4"/><line x1="1410.80" x2="1410.80" y1="826.9" y2="834.4"/><line x1="1432.44" x2="1432.44" y1="826.9" y2="834.4"/><line x1="1454.07" x2="1454.07" y1="826.9" y2="834.4"/><line x1="1475.71" x2="1475.71" y1="826.9" y2="834.4"/><line x1="1497.34" x2="1497.34" y1="826.9" y2="834.4"/><line x1="1518.98" x2="1518.98" y1="826.9" y2="834.4"/><line x1="1540.61" x2="1540.61" y1="826.9" y2="834.4"/><line x1="1562.25" x2="1562.25" y1="826.9" y2="834.4"/><line x1="1583.88" x2="1583.88" y1="826.9" y2="834.4"/><line x1="1605.52" x2="1605.52" y1="826.9" y2="834.4"/><line x1="1627.15" x2="1627.15" y1="826.9" y2="834.4"/><line x1="1648.79" x2="1648.79" y1="826.9" y2="834.4"/><line x1="1670.42" x2="1670.42" y1="826.9" y2="834.4"/><line x1="1692.06" x2="1692.06" y1="826.9" y2="834.4"/><line x1="1713.69" x2="1713.69" y1="826.9" y2="834.4"/><line x1="1735.33" x2="1735.33" y1="826.9" y2="834.4"/><line x1="1756.96" x2="1756.96" y1="826.9" y2="834.4"/><line x1="1778.60" x2="1778.60" y1="826.9" y2="834.4"/><line x1="1800.23" x2="1800.23" y1="826.9" y2="834.4"/></g>
<path d="M1172.82,730.20C1180.03,742.10,1187.24,754.00,1194.45,754.00C1201.66,754.00,1208.88,724.90,1216.09,724.90C1223.30,724.90,1230.51,725.97,1237.72,728.10C1244.93,730.23,1252.15,754.83,1259.36,759.10C1266.57,763.37,1273.78,763.00,1280.99,765.50C1288.20,768.00,1295.42,774.10,1302.63,774.10C1309.84,774.10,1317.05,758.40,1324.26,758.40C1331.47,758.40,1338.69,776.40,1345.90,776.40C1353.11,776.40,1360.32,760.03,1367.53,752.60C1374.74,745.17,1381.96,731.80,1389.17,731.80C1396.38,731.80,1403.59,741.03,1410.80,744.50C1418.01,747.97,1425.23,749.40,1432.44,752.60C1439.65,755.80,1446.86,763.70,1454.07,763.70C1461.28,763.70,1468.50,751.70,1475.71,751.70C1482.92,751.70,1490.13,782.80,1497.34,782.80C1504.55,782.80,1511.77,738.70,1518.98,738.70C1526.19,738.70,1533.40,769.90,1540.61,769.90C1547.82,769.90,1555.04,759.40,1562.25,754.90C1569.46,750.40,1576.67,742.90,1583.88,742.90C1591.09,742.90,1598.31,758.40,1605.52,758.40C1612.73,758.40,1619.94,751.55,1627.15,748.70C1634.36,745.85,1641.58,741.30,1648.79,741.30C1656.00,741.30,1663.21,743.38,1670.42,746.80C1677.63,750.22,1684.85,757.45,1692.06,761.80C1699.27,766.15,1706.48,772.90,1713.69,772.90C1720.90,772.90,1728.12,760.73,1735.33,753.30C1742.54,745.87,1749.75,728.30,1756.96,728.30C1764.17,728.30,1771.39,731.63,1778.60,738.30C1785.81,744.97,1793.02,758.58,1800.23,772.20" fill="none" stroke="#a3a3a3" stroke-width="2.6" stroke-linejoin="round" stroke-linecap="round"/>
<g fill="#fff" stroke="#a3a3a3" stroke-width="2.5"><circle cx="1172.82" cy="730.20" r="2.5"/><circle cx="1194.45" cy="754.00" r="2.5"/><circle cx="1216.09" cy="724.90" r="2.5"/><circle cx="1237.72" cy="728.10" r="2.5"/><circle cx="1259.36" cy="759.10" r="2.5"/><circle cx="1280.99" cy="765.50" r="2.5"/><circle cx="1302.63" cy="774.10" r="2.5"/><circle cx="1324.26" cy="758.40" r="2.5"/><circle cx="1345.90" cy="776.40" r="2.5"/><circle cx="1367.53" cy="752.60" r="2.5"/><circle cx="1389.17" cy="731.80" r="2.5"/><circle cx="1410.80" cy="744.50" r="2.5"/><circle cx="1432.44" cy="752.60" r="2.5"/><circle cx="1454.07" cy="763.70" r="2.5"/><circle cx="1475.71" cy="751.70" r="2.5"/><circle cx="1497.34" cy="782.80" r="2.5"/><circle cx="1518.98" cy="738.70" r="2.5"/><circle cx="1540.61" cy="769.90" r="2.5"/><circle cx="1562.25" cy="754.90" r="2.5"/><circle cx="1583.88" cy="742.90" r="2.5"/><circle cx="1605.52" cy="758.40" r="2.5"/><circle cx="1627.15" cy="748.70" r="2.5"/><circle cx="1648.79" cy="741.30" r="2.5"/><circle cx="1670.42" cy="746.80" r="2.5"/><circle cx="1692.06" cy="761.80" r="2.5"/><circle cx="1713.69" cy="772.90" r="2.5"/><circle cx="1735.33" cy="753.30" r="2.5"/><circle cx="1756.96" cy="728.30" r="2.5"/><circle cx="1778.60" cy="738.30" r="2.5"/><circle cx="1800.23" cy="772.20" r="2.5"/></g>
<path d="M1172.82,709.60C1180.03,723.35,1187.24,737.10,1194.45,737.10C1201.66,737.10,1208.88,716.70,1216.09,714.70C1223.30,712.70,1230.51,711.70,1237.72,711.70C1244.93,711.70,1252.15,740.30,1259.36,750.50C1266.57,760.70,1273.78,772.90,1280.99,772.90C1288.20,772.90,1295.42,767.93,1302.63,763.20C1309.84,758.47,1317.05,744.50,1324.26,744.50C1331.47,744.50,1338.69,764.40,1345.90,764.40C1353.11,764.40,1360.32,740.67,1367.53,737.60C1374.74,734.53,1381.96,735.85,1389.17,733.00C1396.38,730.15,1403.59,720.50,1410.80,720.50C1418.01,720.50,1425.23,733.15,1432.44,739.00C1439.65,744.85,1446.86,755.60,1454.07,755.60C1461.28,755.60,1468.50,745.20,1475.71,745.20C1482.92,745.20,1490.13,778.70,1497.34,778.70C1504.55,778.70,1511.77,719.30,1518.98,719.30C1526.19,719.30,1533.40,759.00,1540.61,759.00C1547.82,759.00,1555.04,754.48,1562.25,749.80C1569.46,745.12,1576.67,730.90,1583.88,730.90C1591.09,730.90,1598.31,751.00,1605.52,751.00C1612.73,751.00,1619.94,720.90,1627.15,720.90C1634.36,720.90,1641.58,751.70,1648.79,751.70C1656.00,751.70,1663.21,729.00,1670.42,729.00C1677.63,729.00,1684.85,745.35,1692.06,751.70C1699.27,758.05,1706.48,767.10,1713.69,767.10C1720.90,767.10,1728.12,764.03,1735.33,757.90C1742.54,751.77,1749.75,729.18,1756.96,720.90C1764.17,712.62,1771.39,708.20,1778.60,708.20C1785.81,708.20,1793.02,735.95,1800.23,763.70" fill="none" stroke="#10b981" stroke-width="2.6" stroke-linejoin="round" stroke-linecap="round"/>
<g fill="#fff" stroke="#10b981" stroke-width="2.5"><circle cx="1172.82" cy="709.60" r="2.5"/><circle cx="1194.45" cy="737.10" r="2.5"/><circle cx="1216.09" cy="714.70" r="2.5"/><circle cx="1237.72" cy="711.70" r="2.5"/><circle cx="1259.36" cy="750.50" r="2.5"/><circle cx="1280.99" cy="772.90" r="2.5"/><circle cx="1302.63" cy="763.20" r="2.5"/><circle cx="1324.26" cy="744.50" r="2.5"/><circle cx="1345.90" cy="764.40" r="2.5"/><circle cx="1367.53" cy="737.60" r="2.5"/><circle cx="1389.17" cy="733.00" r="2.5"/><circle cx="1410.80" cy="720.50" r="2.5"/><circle cx="1432.44" cy="739.00" r="2.5"/><circle cx="1454.07" cy="755.60" r="2.5"/><circle cx="1475.71" cy="745.20" r="2.5"/><circle cx="1497.34" cy="778.70" r="2.5"/><circle cx="1518.98" cy="719.30" r="2.5"/><circle cx="1540.61" cy="759.00" r="2.5"/><circle cx="1562.25" cy="749.80" r="2.5"/><circle cx="1583.88" cy="730.90" r="2.5"/><circle cx="1605.52" cy="751.00" r="2.5"/><circle cx="1627.15" cy="720.90" r="2.5"/><circle cx="1648.79" cy="751.70" r="2.5"/><circle cx="1670.42" cy="729.00" r="2.5"/><circle cx="1692.06" cy="751.70" r="2.5"/><circle cx="1713.69" cy="767.10" r="2.5"/><circle cx="1735.33" cy="757.90" r="2.5"/><circle cx="1756.96" cy="720.90" r="2.5"/><circle cx="1778.60" cy="708.20" r="2.5"/><circle cx="1800.23" cy="763.70" r="2.5"/></g>
<path d="M1172.82,783.80C1180.03,789.10,1187.24,794.40,1194.45,794.40C1201.66,794.40,1208.88,786.30,1216.09,786.30C1223.30,786.30,1230.51,787.00,1237.72,788.40C1244.93,789.80,1252.15,795.38,1259.36,798.30C1266.57,801.22,1273.78,805.90,1280.99,805.90C1288.20,805.90,1295.42,805.05,1302.63,803.40C1309.84,801.75,1317.05,796.00,1324.26,796.00C1331.47,796.00,1338.69,803.40,1345.90,803.40C1353.11,803.40,1360.32,796.40,1367.53,794.40C1374.74,792.40,1381.96,791.40,1389.17,791.40C1396.38,791.40,1403.59,791.40,1410.80,791.40C1418.01,791.40,1425.23,794.27,1432.44,796.00C1439.65,797.73,1446.86,801.80,1454.07,801.80C1461.28,801.80,1468.50,799.00,1475.71,799.00C1482.92,799.00,1490.13,808.70,1497.34,808.70C1504.55,808.70,1511.77,796.50,1518.98,796.50C1526.19,796.50,1533.40,805.20,1540.61,805.20C1547.82,805.20,1555.04,799.03,1562.25,798.30C1569.46,797.57,1576.67,797.20,1583.88,797.20C1591.09,797.20,1598.31,798.30,1605.52,798.30C1612.73,798.30,1619.94,789.80,1627.15,789.80C1634.36,789.80,1641.58,796.70,1648.79,796.70C1656.00,796.70,1663.21,794.40,1670.42,794.40C1677.63,794.40,1684.85,796.28,1692.06,797.90C1699.27,799.52,1706.48,804.10,1713.69,804.10C1720.90,804.10,1728.12,800.18,1735.33,797.60C1742.54,795.02,1749.75,789.33,1756.96,788.60C1764.17,787.87,1771.39,787.50,1778.60,787.50C1785.81,787.50,1793.02,795.00,1800.23,802.50" fill="none" stroke="#f59e0b" stroke-width="2.6" stroke-linejoin="round" stroke-linecap="round"/>
<g fill="#fff" stroke="#f59e0b" stroke-width="2.5"><circle cx="1172.82" cy="783.80" r="2.5"/><circle cx="1194.45" cy="794.40" r="2.5"/><circle cx="1216.09" cy="786.30" r="2.5"/><circle cx="1237.72" cy="788.40" r="2.5"/><circle cx="1259.36" cy="798.30" r="2.5"/><circle cx="1280.99" cy="805.90" r="2.5"/><circle cx="1302.63" cy="803.40" r="2.5"/><circle cx="1324.26" cy="796.00" r="2.5"/><circle cx="1345.90" cy="803.40" r="2.5"/><circle cx="1367.53" cy="794.40" r="2.5"/><circle cx="1389.17" cy="791.40" r="2.5"/><circle cx="1410.80" cy="791.40" r="2.5"/><circle cx="1432.44" cy="796.00" r="2.5"/><circle cx="1454.07" cy="801.80" r="2.5"/><circle cx="1475.71" cy="799.00" r="2.5"/><circle cx="1497.34" cy="808.70" r="2.5"/><circle cx="1518.98" cy="796.50" r="2.5"/><circle cx="1540.61" cy="805.20" r="2.5"/><circle cx="1562.25" cy="798.30" r="2.5"/><circle cx="1583.88" cy="797.20" r="2.5"/><circle cx="1605.52" cy="798.30" r="2.5"/><circle cx="1627.15" cy="789.80" r="2.5"/><circle cx="1648.79" cy="796.70" r="2.5"/><circle cx="1670.42" cy="794.40" r="2.5"/><circle cx="1692.06" cy="797.90" r="2.5"/><circle cx="1713.69" cy="804.10" r="2.5"/><circle cx="1735.33" cy="797.60" r="2.5"/><circle cx="1756.96" cy="788.60" r="2.5"/><circle cx="1778.60" cy="787.50" r="2.5"/><circle cx="1800.23" cy="802.50" r="2.5"/></g>
<path d="M1172.82,820.30C1180.03,823.40,1187.24,826.50,1194.45,826.50C1201.66,826.50,1208.88,826.10,1216.09,825.30C1223.30,824.50,1230.51,822.63,1237.72,821.60C1244.93,820.57,1252.15,819.10,1259.36,819.10C1266.57,819.10,1273.78,825.60,1280.99,825.60C1288.20,825.60,1295.42,825.18,1302.63,824.60C1309.84,824.02,1317.05,822.10,1324.26,822.10C1331.47,822.10,1338.69,826.90,1345.90,826.90C1353.11,826.90,1360.32,826.90,1367.53,826.90C1374.74,826.90,1381.96,825.60,1389.17,825.60C1396.38,825.60,1403.59,826.90,1410.80,826.90C1418.01,826.90,1425.23,818.60,1432.44,818.60C1439.65,818.60,1446.86,826.00,1454.07,826.00C1461.28,826.00,1468.50,816.80,1475.71,816.80C1482.92,816.80,1490.13,826.00,1497.34,826.00C1504.55,826.00,1511.77,805.20,1518.98,805.20C1526.19,805.20,1533.40,814.03,1540.61,817.50C1547.82,820.97,1555.04,826.00,1562.25,826.00C1569.46,826.00,1576.67,817.30,1583.88,817.30C1591.09,817.30,1598.31,826.90,1605.52,826.90C1612.73,826.90,1619.94,826.90,1627.15,826.90C1634.36,826.90,1641.58,826.90,1648.79,826.90C1656.00,826.90,1663.21,820.70,1670.42,820.70C1677.63,820.70,1684.85,826.90,1692.06,826.90C1699.27,826.90,1706.48,826.90,1713.69,826.90C1720.90,826.90,1728.12,826.90,1735.33,826.90C1742.54,826.90,1749.75,826.90,1756.96,826.90C1764.17,826.90,1771.39,826.90,1778.60,826.90C1785.81,826.90,1793.02,826.90,1800.23,826.90" fill="none" stroke="#f3000f" stroke-width="2.6" stroke-linejoin="round" stroke-linecap="round"/>
<g fill="#fff" stroke="#f3000f" stroke-width="2.5"><circle cx="1172.82" cy="820.30" r="2.5"/><circle cx="1194.45" cy="826.50" r="2.5"/><circle cx="1216.09" cy="825.30" r="2.5"/><circle cx="1237.72" cy="821.60" r="2.5"/><circle cx="1259.36" cy="819.10" r="2.5"/><circle cx="1280.99" cy="825.60" r="2.5"/><circle cx="1302.63" cy="824.60" r="2.5"/><circle cx="1324.26" cy="822.10" r="2.5"/><circle cx="1345.90" cy="826.90" r="2.5"/><circle cx="1367.53" cy="826.90" r="2.5"/><circle cx="1389.17" cy="825.60" r="2.5"/><circle cx="1410.80" cy="826.90" r="2.5"/><circle cx="1432.44" cy="818.60" r="2.5"/><circle cx="1454.07" cy="826.00" r="2.5"/><circle cx="1475.71" cy="816.80" r="2.5"/><circle cx="1497.34" cy="826.00" r="2.5"/><circle cx="1518.98" cy="805.20" r="2.5"/><circle cx="1540.61" cy="817.50" r="2.5"/><circle cx="1562.25" cy="826.00" r="2.5"/><circle cx="1583.88" cy="817.30" r="2.5"/><circle cx="1605.52" cy="826.90" r="2.5"/><circle cx="1627.15" cy="826.90" r="2.5"/><circle cx="1648.79" cy="826.90" r="2.5"/><circle cx="1670.42" cy="820.70" r="2.5"/><circle cx="1692.06" cy="826.90" r="2.5"/><circle cx="1713.69" cy="826.90" r="2.5"/><circle cx="1735.33" cy="826.90" r="2.5"/><circle cx="1756.96" cy="826.90" r="2.5"/><circle cx="1778.60" cy="826.90" r="2.5"/><circle cx="1800.23" cy="826.90" r="2.5"/></g>
<g fill="#a3a3a8" font-size="15" font-family="Liberation Sans, sans-serif"><text x="1151.1" y="644.8" text-anchor="end" textLength="45" lengthAdjust="spacingAndGlyphs">$3800</text><text x="1151.1" y="691.5" text-anchor="end" textLength="45" lengthAdjust="spacingAndGlyphs">$2850</text><text x="1151.1" y="738.4" text-anchor="end" textLength="43" lengthAdjust="spacingAndGlyphs">$1900</text><text x="1151.1" y="785.0" text-anchor="end" textLength="35" lengthAdjust="spacingAndGlyphs">$950</text><text x="1151.1" y="832.1" text-anchor="end" textLength="17.5" lengthAdjust="spacingAndGlyphs">$0</text><text x="1172.82" y="856.7" text-anchor="middle" textLength="26.4" lengthAdjust="spacingAndGlyphs">Sun</text><text x="1172.82" y="879.6" text-anchor="middle" textLength="34.8" lengthAdjust="spacingAndGlyphs">10/12</text><text x="1237.72" y="856.7" text-anchor="middle" textLength="31.5" lengthAdjust="spacingAndGlyphs">Wed</text><text x="1237.72" y="879.6" text-anchor="middle" textLength="34.8" lengthAdjust="spacingAndGlyphs">10/15</text><text x="1302.63" y="856.7" text-anchor="middle" textLength="22.5" lengthAdjust="spacingAndGlyphs">Sat</text><text x="1302.63" y="879.6" text-anchor="middle" textLength="35.8" lengthAdjust="spacingAndGlyphs">10/18</text><text x="1367.53" y="856.7" text-anchor="middle" textLength="25" lengthAdjust="spacingAndGlyphs">Tue</text><text x="1367.53" y="879.6" text-anchor="middle" textLength="35.2" lengthAdjust="spacingAndGlyphs">10/21</text><text x="1432.44" y="856.7" text-anchor="middle" textLength="17" lengthAdjust="spacingAndGlyphs">Fri</text><text x="1432.44" y="879.6" text-anchor="middle" textLength="37.2" lengthAdjust="spacingAndGlyphs">10/24</text><text x="1497.34" y="856.7" text-anchor="middle" textLength="30.3" lengthAdjust="spacingAndGlyphs">Mon</text><text x="1497.34" y="879.6" text-anchor="middle" textLength="38.2" lengthAdjust="spacingAndGlyphs">10/27</text><text x="1562.25" y="856.7" text-anchor="middle" textLength="25.3" lengthAdjust="spacingAndGlyphs">Thu</text><text x="1562.25" y="879.6" text-anchor="middle" textLength="38.8" lengthAdjust="spacingAndGlyphs">10/30</text><text x="1627.15" y="856.7" text-anchor="middle" textLength="26.4" lengthAdjust="spacingAndGlyphs">Sun</text><text x="1627.15" y="879.6" text-anchor="middle" textLength="26" lengthAdjust="spacingAndGlyphs">11/2</text><text x="1692.06" y="856.7" text-anchor="middle" textLength="30.6" lengthAdjust="spacingAndGlyphs">Wed</text><text x="1692.06" y="879.6" text-anchor="middle" textLength="25.3" lengthAdjust="spacingAndGlyphs">11/5</text><text x="1756.96" y="856.7" text-anchor="middle" textLength="21.7" lengthAdjust="spacingAndGlyphs">Sat</text><text x="1756.96" y="879.6" text-anchor="middle" textLength="25.7" lengthAdjust="spacingAndGlyphs">11/8</text></g>
</svg>
<svg class="ic" style="left:18px;top:26px" width="25" height="25" viewBox="0 0 25 25">
<defs><linearGradient id="lg" x1="0" y1="0" x2="1" y2="1"><stop offset="0" stop-color="#2b64a8"/><stop offset=".45" stop-color="#4a4f78"/><stop offset=".6" stop-color="#a8383f"/><stop offset="1" stop-color="#c4343b"/></linearGradient></defs>
<rect x="1.45" y="1.6" width="22.1" height="21.6" rx="2.6" fill="none" stroke="url(#lg)" stroke-width="1.5"/>
<g stroke-linecap="round" stroke-width="1.5">
<path d="M6.3 9.6v5.8" stroke="#3f8fd8"/><path d="M9.4 7.6v10" stroke="#3b7fc8"/><path d="M12.4 4.9v10" stroke="#3b78c0"/><path d="M12.4 13v7.6" stroke="#f0404a"/>
<path d="M15.4 7.6v10" stroke="#e33b47"/><path d="M18.6 9.6v5.8" stroke="#ef4048"/></g>
<path d="M3.6 12.5l3-1v2z" fill="#49a0e6"/><path d="M21.6 12.5l-3-1v2z" fill="#ff4a4f"/>
</svg>
<svg class="ic" style="left:139.90px;top:30.40px" width="16" height="16" viewBox="0 0 24 24" fill="none" stroke="#a1a1aa" stroke-width="2" stroke-linecap="round" stroke-linejoin="round"><path d="m7 15 5 5 5-5"/><path d="m7 9 5-5 5 5"/></svg>
<svg class="ic" style="left:14.75px;top:162.95px" width="20.5" height="20.5" viewBox="0 0 24 24" fill="none" stroke="#fff" stroke-width="2" stroke-linecap="round" stroke-linejoin="round"><rect width="7" height="9" x="3" y="3" rx="1"/><rect width="7" height="5" x="14" y="3" rx="1"/><rect width="7" height="9" x="14" y="12" rx="1"/><rect width="7" height="5" x="3" y="16" rx="1"/></svg>
<svg class="ic" style="left:14.15px;top:207.55px" width="21.5" height="21.5" viewBox="0 0 24 24" fill="none" stroke="#fff" stroke-width="2" stroke-linecap="round" stroke-linejoin="round"><path d="M21 15a2 2 0 0 1-2 2H7l-4 4V5a2 2 0 0 1 2-2h14a2 2 0 0 1 2 2z"/><path d="M8 10h.01"/><path d="M12 10h.01"/><path d="M16 10h.01"/></svg>
<svg class="ic" style="left:45.50px;top:247.65px" width="20.5" height="20.5" viewBox="0 0 24 24" fill="none" stroke="#fff" stroke-width="2" stroke-linecap="round" stroke-linejoin="round"><path d="M3 12a9 9 0 1 0 9-9 9.75 9.75 0 0 0-6.74 2.74L3 8"/><path d="M3 3v5h5"/><path d="M12 7v5l4 2"/></svg>
<svg class="ic" style="left:14px;top:291px" width="23" height="23" viewBox="0 0 23 23" fill="none" stroke="#d6d2d2" stroke-width="1.1" stroke-linejoin="round" stroke-linecap="round">
<path d="M5 5.5H1.6v16h14.6V18.5"/><path d="M12.5 5.5h3.7v4"/><path d="M5 7.3V5l3.8-3.2L12.5 5v2.3z"/>
<rect x="3.4" y="9.3" width="2" height="2"/><rect x="3.4" y="13.3" width="2" height="2"/><rect x="3.4" y="17.3" width="2" height="2"/>
<path d="M5.6 10.3h4M5.6 14.3h3M5.6 18.3h4.5"/>
<path d="M15.3 9.2l5.4 2.6v6l-5.4 2.8-5.4-2.8v-6z"/><path d="M9.9 11.8l5.4 2.7 5.4-2.7M15.3 14.5v6"/><path d="M12.6 10.5l5.4 2.7"/>
</svg>
<svg class="ic" style="left:14.75px;top:337.75px" width="20.5" height="20.5" viewBox="0 0 24 24" fill="none" stroke="#fff" stroke-width="2" stroke-linecap="round" stroke-linejoin="round"><path d="M2.97 12.92A2 2 0 0 0 2 14.63v3.24a2 2 0 0 0 .97 1.71l3 1.8a2 2 0 0 0 2.06 0L12 19v-5.5l-5-3-4.03 2.42Z"/><path d="m7 16.5-4.74-2.85"/><path d="m7 16.5 5-3"/><path d="M7 16.5v5.17"/><path d="M12 13.5V19l3.97 2.38a2 2 0 0 0 2.06 0l3-1.8a2 2 0 0 0 .97-1.71v-3.24a2 2 0 0 0-.97-1.71L17 10.5l-5 3Z"/><path d="m17 16.5-5-3"/><path d="m17 16.5 4.74-2.85"/><path d="M17 16.5v5.17"/><path d="M7.97 4.42A2 2 0 0 0 7 6.13v4.37l5 3 5-3V6.13a2 2 0 0 0-.97-1.71l-3-1.8a2 2 0 0 0-2.06 0l-3 1.8Z"/><path d="M12 8 7.26 5.15"/><path d="m12 8 4.74-2.85"/><path d="M12 13.5V8"/></svg>
<svg class="ic" style="left:15.00px;top:382.50px" width="20" height="20" viewBox="0 0 24 24" fill="none" stroke="#fff" stroke-width="2" stroke-linecap="round" stroke-linejoin="round"><path d="m2 7 4.41-4.41A2 2 0 0 1 7.83 2h8.34a2 2 0 0 1 1.42.59L22 7"/><path d="M4 12v8a2 2 0 0 0 2 2h12a2 2 0 0 0 2-2v-8"/><path d="M15 22v-4a2 2 0 0 0-2-2h-2a2 2 0 0 0-2 2v4"/><path d="M2 7h20"/><path d="M22 7v3a2 2 0 0 1-2 2a2.7 2.7 0 0 1-1.59-.63.7.7 0 0 0-.82 0A2.7 2.7 0 0 1 16 12a2.7 2.7 0 0 1-1.59-.63.7.7 0 0 0-.82 0A2.7 2.7 0 0 1 12 12a2.7 2.7 0 0 1-1.59-.63.7.7 0 0 0-.82 0A2.7 2.7 0 0 1 8 12a2.7 2.7 0 0 1-1.59-.63.7.7 0 0 0-.82 0A2.7 2.7 0 0 1 4 12a2 2 0 0 1-2-2V7"/></svg>
<svg class="ic" style="left:283.80px;top:293.00px" width="20" height="20" viewBox="0 0 24 24" fill="none" stroke="#fff" stroke-width="2" stroke-linecap="round" stroke-linejoin="round"><path d="m6 9 6 6 6-6"/></svg>
<svg class="ic" style="left:283.80px;top:338.00px" width="20" height="20" viewBox="0 0 24 24" fill="none" stroke="#fff" stroke-width="2" stroke-linecap="round" stroke-linejoin="round"><path d="m6 9 6 6 6-6"/></svg>
<svg class="ic" style="left:283.80px;top:383.00px" width="20" height="20" viewBox="0 0 24 24" fill="none" stroke="#fff" stroke-width="2" stroke-linecap="round" stroke-linejoin="round"><path d="m6 9 6 6 6-6"/></svg>
<svg class="ic" style="left:283.80px;top:603.20px" width="20" height="20" viewBox="0 0 24 24" fill="none" stroke="#fff" stroke-width="2" stroke-linecap="round" stroke-linejoin="round"><path d="m6 9 6 6 6-6"/></svg>
<svg class="ic" style="left:15px;top:493px" width="20" height="20" viewBox="0 0 20 20" fill="none" stroke="#fff" stroke-width="1.7" stroke-linejoin="round" stroke-linecap="round">
<path d="M3 9.2h14v6.6a2 2 0 0 1-2 2H5a2 2 0 0 1-2-2z"/><path d="M7.6 12.7h4.8"/>
<path d="M3.4 8.6c-1.2-1.6-.3-3 1.4-3.3L6.6 2.4l2 2.4 3 .6-1 3.2"/><path d="M12.6 8.6l1.2-6 4 1.1-1.6 5"/>
</svg>
<svg class="ic" style="left:14.75px;top:602.75px" width="20.5" height="20.5" viewBox="0 0 24 24" fill="none" stroke="#fff" stroke-width="2" stroke-linecap="round" stroke-linejoin="round"><path d="M6 8a6 6 0 0 1 12 0c0 7 3 9 3 9H3s3-2 3-9"/><path d="M10.3 21a1.94 1.94 0 0 0 3.4 0"/></svg>
<svg class="ic" style="left:17px;top:852.5px;border-radius:7px" width="43.5" height="43.5" viewBox="0 0 43 43">
<defs><filter id="bla" x="-10%" y="-10%" width="120%" height="120%"><feTurbulence type="fractalNoise" baseFrequency="0.35" numOctaves="2" seed="7" result="n"/><feDisplacementMap in="SourceGraphic" in2="n" scale="4.5" xChannelSelector="R" yChannelSelector="G"/><feGaussianBlur stdDeviation="0.45"/></filter></defs>
<rect width="43" height="43" fill="#c2111e"/>
<g filter="url(#bla)">
<path d="M3 3l8-3 6 8-7 10-6 2zM30 20l9-12 3 14-6 12zM4 30l10 3-2 8-9 1z" fill="#de1b2b"/>
<circle cx="22" cy="9.5" r="12.5" fill="#b30f1c"/>
<path d="M11.500 0c-3 4-3.600 10-.4 15.500" stroke="#f8e6e3" stroke-width="2" fill="none"/>
<path d="M32 3c3.200 4 3.400 10-1.500 15.500" stroke="#f8e6e3" stroke-width="2.400" fill="none"/>
<path d="M35.500 .5L14.500 11.500" stroke="#3a0f1f" stroke-width="3.200" stroke-linecap="round"/>
<path d="M16.500 12l8-4.500 4.500 6 2 10 4 3.500-4.500 3-2.500 9 6.500 4H9l5-6-4.500-7.500-6.500-1 6.500-5 4.500-4z" fill="#3a0d1f"/>
<path d="M21 14c2.500-1.500 5 .5 6 4.500s0 7-1.500 10.500-3.500 3-4.500 0-1.500-12 0-15z" fill="#50344c"/>
<path d="M26.500 31l7-4.500 4 5.500-6 5.500z" fill="#e21e2d"/>
<path d="M5 34l9-2 5 5 8-2 11 5v3H3z" fill="#3d0c1b"/>
<path d="M10 37l6 3 4-1.500M26 40l5 1.500" stroke="#4f7680" stroke-width="1.400" fill="none" opacity=".8"/>
</g>
<rect x="0" y="2" width="1.800" height="39" fill="#f7ebe6" opacity=".92"/><rect x="40.400" y="3" width="2.600" height="37" fill="#f7ebe6" opacity=".92"/>
</svg>
<svg class="ic" style="left:270.25px;top:866.45px" width="17.5" height="17.5" viewBox="0 0 24 24" fill="none" stroke="#a1a1aa" stroke-width="2" stroke-linecap="round" stroke-linejoin="round"><path d="m7 15 5 5 5-5"/><path d="m7 9 5-5 5 5"/></svg>
<svg class="ic" style="left:335.25px;top:22.05px" width="22.5" height="22.5" viewBox="0 0 24 24" fill="none" stroke="#9ca3af" stroke-width="2" stroke-linecap="round" stroke-linejoin="round"><rect width="18" height="18" x="3" y="3" rx="2"/><path d="M9 3v18"/></svg>
<svg class="ic" style="left:419.25px;top:23.45px" width="19.5" height="19.5" viewBox="0 0 24 24" fill="none" stroke="#9ca3af" stroke-width="2" stroke-linecap="round" stroke-linejoin="round"><circle cx="11" cy="11" r="8"/><path d="m21 21-4.3-4.3"/></svg>
<svg class="ic" style="left:1614.75px;top:22.75px" width="20.5" height="20.5" viewBox="0 0 24 24" fill="none" stroke="#fff" stroke-width="2" stroke-linecap="round" stroke-linejoin="round"><path d="M12.22 2h-.44a2 2 0 0 0-2 2v.18a2 2 0 0 1-1 1.73l-.43.25a2 2 0 0 1-2 0l-.15-.08a2 2 0 0 0-2.73.73l-.22.38a2 2 0 0 0 .73 2.73l.15.1a2 2 0 0 1 1 1.72v.51a2 2 0 0 1-1 1.74l-.15.09a2 2 0 0 0-.73 2.73l.22.38a2 2 0 0 0 2.73.73l.15-.08a2 2 0 0 1 2 0l.43.25a2 2 0 0 1 1 1.73V20a2 2 0 0 0 2 2h.44a2 2 0 0 0 2-2v-.18a2 2 0 0 1 1-1.73l.43-.25a2 2 0 0 1 2 0l.15.08a2 2 0 0 0 2.73-.73l.22-.39a2 2 0 0 0-.73-2.73l-.15-.08a2 2 0 0 1-1-1.74v-.5a2 2 0 0 1 1-1.74l.15-.09a2 2 0 0 0 .73-2.73l-.22-.38a2 2 0 0 0-2.73-.73l-.15.08a2 2 0 0 1-2 0l-.43-.25a2 2 0 0 1-1-1.73V4a2 2 0 0 0-2-2z"/><circle cx="12" cy="12" r="3"/></svg>
<svg class="ic" style="left:1669.75px;top:22.75px" width="20.5" height="20.5" viewBox="0 0 24 24" fill="none" stroke="#fff" stroke-width="2" stroke-linecap="round" stroke-linejoin="round"><path d="M6 8a6 6 0 0 1 12 0c0 7 3 9 3 9H3s3-2 3-9"/><path d="M10.3 21a1.94 1.94 0 0 0 3.4 0"/></svg>
<svg class="ic" style="left:1725.00px;top:23.00px" width="20" height="20" viewBox="0 0 24 24" fill="none" stroke="#fff" stroke-width="2" stroke-linecap="round" stroke-linejoin="round"><path d="M12 3a6 6 0 0 0 9 9 9 9 0 1 1-9-9Z"/></svg>
<svg class="ic" style="left:1790px;top:11px;border-radius:7px" width="43" height="43" viewBox="0 0 43 43">
<defs><filter id="blb" x="-10%" y="-10%" width="120%" height="120%"><feTurbulence type="fractalNoise" baseFrequency="0.35" numOctaves="2" seed="7" result="n"/><feDisplacementMap in="SourceGraphic" in2="n" scale="4.5" xChannelSelector="R" yChannelSelector="G"/><feGaussianBlur stdDeviation="0.45"/></filter></defs>
<rect width="43" height="43" fill="#c2111e"/>
<g filter="url(#blb)">
<path d="M3 3l8-3 6 8-7 10-6 2zM30 20l9-12 3 14-6 12zM4 30l10 3-2 8-9 1z" fill="#de1b2b"/>
<circle cx="22" cy="9.5" r="12.5" fill="#b30f1c"/>
<path d="M11.500 0c-3 4-3.600 10-.4 15.500" stroke="#f8e6e3" stroke-width="2" fill="none"/>
<path d="M32 3c3.200 4 3.400 10-1.500 15.500" stroke="#f8e6e3" stroke-width="2.400" fill="none"/>
<path d="M35.500 .5L14.500 11.500" stroke="#3a0f1f" stroke-width="3.200" stroke-linecap="round"/>
<path d="M16.500 12l8-4.500 4.500 6 2 10 4 3.500-4.500 3-2.500 9 6.500 4H9l5-6-4.500-7.500-6.500-1 6.500-5 4.500-4z" fill="#3a0d1f"/>
<path d="M21 14c2.500-1.500 5 .5 6 4.500s0 7-1.500 10.500-3.500 3-4.500 0-1.500-12 0-15z" fill="#50344c"/>
<path d="M26.500 31l7-4.500 4 5.500-6 5.500z" fill="#e21e2d"/>
<path d="M5 34l9-2 5 5 8-2 11 5v3H3z" fill="#3d0c1b"/>
<path d="M10 37l6 3 4-1.500M26 40l5 1.500" stroke="#4f7680" stroke-width="1.400" fill="none" opacity=".8"/>
</g>
<rect x="0" y="2" width="1.800" height="39" fill="#f7ebe6" opacity=".92"/><rect x="40.400" y="3" width="2.600" height="37" fill="#f7ebe6" opacity=".92"/>
</svg>
<svg class="ic" style="left:1561.75px;top:150.25px" width="20.5" height="20.5" viewBox="0 0 24 24" fill="none" stroke="#fff" stroke-width="2" stroke-linecap="round" stroke-linejoin="round"><path d="M8 2v4"/><path d="M16 2v4"/><rect width="18" height="18" x="3" y="4" rx="2"/><path d="M3 10h18"/></svg>
<svg class="ic" style="left:1106.05px;top:282.65px" width="19.5" height="19.5" viewBox="0 0 24 24" fill="none" stroke="#ee2244" stroke-width="2" stroke-linecap="round" stroke-linejoin="round"><path d="M12 5v14"/><path d="m19 12-7 7-7-7"/></svg>
<svg class="ic" style="left:1484.95px;top:282.15px" width="19.5" height="19.5" viewBox="0 0 24 24" fill="none" stroke="#10b981" stroke-width="2" stroke-linecap="round" stroke-linejoin="round"><path d="m5 12 7-7 7 7"/><path d="M12 19V5"/></svg>
<svg class="ic" style="left:1230.90px;top:579.00px" width="20" height="20" viewBox="0 0 24 24" fill="none" stroke="#fff" stroke-width="2" stroke-linecap="round" stroke-linejoin="round"><circle cx="12" cy="12" r="10"/><path d="M12 16v-4"/><path d="M12 8h.01"/></svg>
<svg class="ic" style="left:1485.90px;top:504.00px" width="20" height="20" viewBox="0 0 24 24" fill="none" stroke="#fff" stroke-width="2" stroke-linecap="round" stroke-linejoin="round"><circle cx="12" cy="12" r="10"/><path d="M12 16v-4"/><path d="M12 8h.01"/></svg>
<svg class="ic" style="left:1736.90px;top:504.00px" width="20" height="20" viewBox="0 0 24 24" fill="none" stroke="#fff" stroke-width="2" stroke-linecap="round" stroke-linejoin="round"><circle cx="12" cy="12" r="10"/><path d="M12 16v-4"/><path d="M12 8h.01"/></svg>
<span class="t" style="left:55.21px;top:29.00px;font-size:19px;line-height:19px;color:#fff;letter-spacing:-0.450px;font-weight:700;transform:scaleX(0.9657);transform-origin:0 0;">Acme Inc</span>
<span class="t" style="left:15.50px;top:125.00px;font-size:16.6px;line-height:16.6px;color:#9f9fa9;letter-spacing:-0.018px;-webkit-text-stroke:0.2px #9f9fa9;">Application</span>
<span class="t" style="left:43.92px;top:164.00px;font-size:19px;line-height:19px;color:#fff;letter-spacing:0.025px;-webkit-text-stroke:0.35px #fff;">Dashboard</span>
<span class="t" style="left:43.92px;top:209.00px;font-size:19px;line-height:19px;color:#fff;letter-spacing:-0.496px;-webkit-text-stroke:0.35px #fff;">DIANA Chat</span>
<span class="t" style="left:74.52px;top:249.00px;font-size:19px;line-height:19px;color:#fff;letter-spacing:0.178px;-webkit-text-stroke:0.35px #fff;">History</span>
<span class="t" style="left:44.61px;top:294.00px;font-size:19px;line-height:19px;color:#fff;letter-spacing:-0.450px;transform:scaleX(0.9879);transform-origin:0 0;-webkit-text-stroke:0.35px #fff;">Sales</span>
<span class="t" style="left:43.72px;top:339.00px;font-size:19px;line-height:19px;color:#fff;letter-spacing:0.042px;-webkit-text-stroke:0.35px #fff;">Inventory</span>
<span class="t" style="left:44.61px;top:384.00px;font-size:19px;line-height:19px;color:#fff;letter-spacing:-0.128px;-webkit-text-stroke:0.35px #fff;">Suppliers</span>
<span class="t" style="left:15.14px;top:455.00px;font-size:16.6px;line-height:16.6px;color:#9f9fa9;letter-spacing:-0.019px;-webkit-text-stroke:0.2px #9f9fa9;">Tools</span>
<span class="t" style="left:45.60px;top:494.00px;font-size:19px;line-height:19px;color:#fff;letter-spacing:-0.178px;-webkit-text-stroke:0.35px #fff;">Watchlist</span>
<span class="t" style="left:14.10px;top:565.00px;font-size:16.6px;line-height:16.6px;color:#9f9fa9;letter-spacing:0.133px;-webkit-text-stroke:0.2px #9f9fa9;">Notifications</span>
<span class="t" style="left:44.12px;top:604.00px;font-size:19px;line-height:19px;color:#fff;letter-spacing:0.242px;-webkit-text-stroke:0.35px #fff;">Notification</span>
<span class="t" style="left:80.25px;top:857.00px;font-size:17.8px;line-height:17.8px;color:#fff;letter-spacing:0.450px;transform:scaleX(1.0309);transform-origin:0 0;-webkit-text-stroke:0.3px #fff;">mmerlo</span>
<span class="t" style="left:80.41px;top:879.00px;font-size:15.8px;line-height:15.8px;color:#9f9fa9;letter-spacing:0.200px;">mmerlo@pricelogic.ai</span>
<span class="t" style="left:453.31px;top:23.00px;font-size:19px;line-height:19px;color:#99a1af;letter-spacing:-0.197px;">Global search...</span>
<span class="t" style="left:830.96px;top:25.00px;font-size:15.8px;line-height:15.8px;color:#cfcfd2;letter-spacing:0.188px;-webkit-text-stroke:0.2px #cfcfd2;">Ctrl + k</span>
<span class="t" style="left:334.20px;top:91.00px;font-size:25.6px;line-height:25.6px;color:#fff;letter-spacing:-0.472px;font-weight:700;">Dashboard</span>
<span class="t" style="left:349.90px;top:151.00px;font-size:18.6px;line-height:18.6px;color:#fff;letter-spacing:0.450px;transform:scaleX(1.0175);transform-origin:0 0;-webkit-text-stroke:0.35px #fff;">All</span>
<span class="t" style="left:391.97px;top:151.00px;font-size:18.6px;line-height:18.6px;color:#fff;letter-spacing:-0.450px;transform:scaleX(0.9849);transform-origin:0 0;-webkit-text-stroke:0.35px #fff;">FBA</span>
<span class="t" style="left:447.95px;top:151.00px;font-size:18.6px;line-height:18.6px;color:#fff;letter-spacing:0.272px;-webkit-text-stroke:0.35px #fff;">FBM</span>
<span class="t" style="left:507.95px;top:151.00px;font-size:18.6px;line-height:18.6px;color:#fff;letter-spacing:0.037px;-webkit-text-stroke:0.35px #fff;">MCF</span>
<span class="t" style="left:1591.84px;top:151.00px;font-size:18.4px;line-height:18.4px;color:#fff;letter-spacing:0.069px;-webkit-text-stroke:0.35px #fff;">Oct 12 2025 - Nov 10 2025</span>
<span class="t" style="left:344.86px;top:221.00px;font-size:18.4px;line-height:18.4px;color:#fff;letter-spacing:-0.272px;-webkit-text-stroke:0.55px #fff;">Restock Forecast</span>
<span class="t" style="left:626.31px;top:224.00px;font-size:15.8px;line-height:15.8px;color:#fff;letter-spacing:-0.054px;-webkit-text-stroke:0.35px #fff;">See All</span>
<span class="t" style="left:345.71px;top:253.00px;font-size:27.2px;line-height:27.2px;color:#fff;letter-spacing:0.450px;font-weight:700;transform:scaleX(1.0502);transform-origin:0 0;">658</span>
<span class="t" style="left:519.80px;top:253.00px;font-size:27.2px;line-height:27.2px;color:#fff;letter-spacing:-0.450px;font-weight:700;transform:scaleX(0.9469);transform-origin:0 0;">7.316</span>
<span class="t" style="left:345.07px;top:287.00px;font-size:15.8px;line-height:15.8px;color:#99a1af;letter-spacing:0.297px;">Products</span>
<span class="t" style="left:519.61px;top:287.00px;font-size:15.8px;line-height:15.8px;color:#99a1af;letter-spacing:0.221px;">Units</span>
<span class="t" style="left:346.60px;top:321.00px;font-size:24.4px;line-height:24.4px;color:#fff;letter-spacing:-0.028px;font-weight:700;">$180,890.31</span>
<span class="t" style="left:520.22px;top:321.00px;font-size:24.4px;line-height:24.4px;color:#ff8a0a;letter-spacing:0.198px;font-weight:700;">568 of 658</span>
<span class="t" style="left:345.56px;top:352.00px;font-size:15.8px;line-height:15.8px;color:#99a1af;letter-spacing:-0.089px;">Cash Required</span>
<span class="t" style="left:519.61px;top:352.00px;font-size:15.8px;line-height:15.8px;color:#99a1af;letter-spacing:0.137px;">Urgent Products</span>
<span class="t" style="left:724.86px;top:221.00px;font-size:18.4px;line-height:18.4px;color:#fff;letter-spacing:-0.161px;-webkit-text-stroke:0.55px #fff;">Inventory Summary</span>
<span class="t" style="left:1006.31px;top:224.00px;font-size:15.8px;line-height:15.8px;color:#fff;letter-spacing:-0.054px;-webkit-text-stroke:0.35px #fff;">See All</span>
<span class="t" style="left:725.07px;top:256.00px;font-size:15.8px;line-height:15.8px;color:#99a1af;letter-spacing:0.328px;">Products:</span>
<span class="t" style="left:1030.09px;top:254.00px;font-size:18px;line-height:18px;color:#fff;letter-spacing:0.450px;font-weight:700;transform:scaleX(1.0995);transform-origin:0 0;">590</span>
<span class="t" style="left:725.31px;top:286.00px;font-size:15.8px;line-height:15.8px;color:#99a1af;letter-spacing:0.346px;">Units:</span>
<span class="t" style="left:1014.71px;top:284.00px;font-size:18px;line-height:18px;color:#fff;letter-spacing:0.450px;font-weight:700;transform:scaleX(1.0474);transform-origin:0 0;">5.329</span>
<span class="t" style="left:726.05px;top:323.00px;font-size:15.8px;line-height:15.8px;color:#99a1af;letter-spacing:0.144px;">Total Value:</span>
<span class="t" style="left:928.00px;top:316.00px;font-size:24.4px;line-height:24.4px;color:#fff;letter-spacing:0.022px;font-weight:700;">$185,759.95</span>
<span class="t" style="left:1105.42px;top:220.00px;font-size:18.6px;line-height:18.6px;color:#fff;letter-spacing:-0.338px;-webkit-text-stroke:0.55px #fff;">Sales Total</span>
<span class="t" style="left:1106.00px;top:249.00px;font-size:27.4px;line-height:27.4px;color:#fff;letter-spacing:0.083px;font-weight:700;">$76,453.21</span>
<span class="t" style="left:1126.11px;top:284.00px;font-size:15.8px;line-height:15.8px;color:#99a1af;letter-spacing:0.121px;">-18.8% compared to</span>
<span class="t" style="left:1274.01px;top:284.00px;font-size:15.8px;line-height:15.8px;color:#99a1af;letter-spacing:0.267px;text-decoration:underline;text-underline-offset:2px;text-decoration-thickness:1px;">previous period</span>
<span class="t" style="left:1484.05px;top:220.00px;font-size:18.6px;line-height:18.6px;color:#fff;letter-spacing:-0.070px;-webkit-text-stroke:0.55px #fff;">Profit Margin</span>
<span class="t" style="left:1483.96px;top:249.00px;font-size:27.4px;line-height:27.4px;color:#fff;letter-spacing:-0.450px;font-weight:700;transform:scaleX(0.8998);transform-origin:0 0;">17.14%</span>
<span class="t" style="left:1505.75px;top:284.00px;font-size:15.8px;line-height:15.8px;color:#99a1af;letter-spacing:0.223px;">4.95% compared to</span>
<span class="t" style="left:1650.31px;top:284.00px;font-size:15.8px;line-height:15.8px;color:#99a1af;letter-spacing:0.253px;text-decoration:underline;text-underline-offset:2px;text-decoration-thickness:1px;">previous period</span>
<span class="t" style="left:345.96px;top:421.00px;font-size:20.4px;line-height:20.4px;color:#fff;letter-spacing:-0.562px;font-weight:700;">Order Activity</span>
<span class="t" style="left:345.74px;top:477.00px;font-size:18.4px;line-height:18.4px;color:#a3a3ab;letter-spacing:0.321px;-webkit-text-stroke:0.2px #a3a3ab;">Orders</span>
<span class="t" style="left:345.19px;top:502.00px;font-size:25px;line-height:25px;color:#2b7fff;letter-spacing:-0.450px;font-weight:700;transform:scaleX(0.9005);transform-origin:0 0;">1619</span>
<span class="t" style="left:345.74px;top:542.00px;font-size:18.4px;line-height:18.4px;color:#a3a3ab;letter-spacing:0.346px;-webkit-text-stroke:0.2px #a3a3ab;">Cancelled</span>
<span class="t" style="left:345.26px;top:567.00px;font-size:25px;line-height:25px;color:#fe9a00;letter-spacing:-0.450px;font-weight:700;transform:scaleX(0.8569);transform-origin:0 0;">141</span>
<span class="t" style="left:590.76px;top:477.00px;font-size:18.4px;line-height:18.4px;color:#a3a3ab;letter-spacing:0.321px;-webkit-text-stroke:0.2px #a3a3ab;">Items Shipped</span>
<span class="t" style="left:590.64px;top:502.00px;font-size:25px;line-height:25px;color:#51a2ff;letter-spacing:-0.243px;font-weight:700;">1609</span>
<span class="t" style="left:590.76px;top:542.00px;font-size:18.4px;line-height:18.4px;color:#a3a3ab;letter-spacing:0.264px;-webkit-text-stroke:0.2px #a3a3ab;">Returns</span>
<span class="t" style="left:591.42px;top:567.00px;font-size:25px;line-height:25px;color:#a3abb9;letter-spacing:0.596px;font-weight:700;">25</span>
<span class="t" style="left:625.93px;top:573.00px;font-size:18.6px;line-height:18.6px;color:#a3abb9;letter-spacing:-0.008px;font-weight:700;">(1.5%)</span>
<span class="t" style="left:836.76px;top:477.00px;font-size:18.4px;line-height:18.4px;color:#a3a3ab;letter-spacing:0.441px;-webkit-text-stroke:0.2px #a3a3ab;">Pending</span>
<span class="t" style="left:837.80px;top:502.00px;font-size:25px;line-height:25px;color:#8ec5ff;letter-spacing:0.450px;font-weight:700;transform:scaleX(1.0277);transform-origin:0 0;">35</span>
<span class="t" style="left:836.76px;top:542.00px;font-size:18.4px;line-height:18.4px;color:#a3a3ab;letter-spacing:0.263px;-webkit-text-stroke:0.2px #a3a3ab;">Refunds</span>
<span class="t" style="left:837.80px;top:567.00px;font-size:25px;line-height:25px;color:#fb2c36;letter-spacing:0.450px;font-weight:700;transform:scaleX(1.0276);transform-origin:0 0;">34</span>
<span class="t" style="left:870.92px;top:425.00px;font-size:19px;line-height:19px;color:#fff;letter-spacing:-0.552px;-webkit-text-stroke:0.5px #fff;">Day</span>
<span class="t" style="left:927.10px;top:425.00px;font-size:19px;line-height:19px;color:#a6a6b0;letter-spacing:-0.450px;transform:scaleX(0.9709);transform-origin:0 0;-webkit-text-stroke:0.4px #a6a6b0;">Week</span>
<span class="t" style="left:994.20px;top:425.00px;font-size:19px;line-height:19px;color:#a6a6b0;letter-spacing:0.450px;transform:scaleX(1.0124);transform-origin:0 0;-webkit-text-stroke:0.4px #a6a6b0;">Month</span>
<span class="t" style="left:1105.68px;top:421.00px;font-size:20.4px;line-height:20.4px;color:#fff;letter-spacing:-0.523px;font-weight:700;">Sales Performance</span>
<span class="t" style="left:1105.71px;top:477.00px;font-size:18.4px;line-height:18.4px;color:#a3a3ab;letter-spacing:0.086px;-webkit-text-stroke:0.2px #a3a3ab;">Total Sales</span>
<span class="t" style="left:1106.00px;top:504.00px;font-size:23.2px;line-height:23.2px;color:#2b7fff;letter-spacing:0.450px;font-weight:700;transform:scaleX(1.0302);transform-origin:0 0;">$76,453.21</span>
<span class="t" style="left:1104.56px;top:552.00px;font-size:18.4px;line-height:18.4px;color:#a3a3ab;letter-spacing:0.254px;-webkit-text-stroke:0.2px #a3a3ab;">Refunded Amount</span>
<span class="t" style="left:1106.50px;top:579.00px;font-size:23.2px;line-height:23.2px;color:#fb2c36;letter-spacing:0.450px;font-weight:700;transform:scaleX(1.0750);transform-origin:0 0;">$2,059.06</span>
<span class="t" style="left:1351.90px;top:477.00px;font-size:18.4px;line-height:18.4px;color:#a3a3ab;letter-spacing:-0.094px;-webkit-text-stroke:0.2px #a3a3ab;">Amazon Fees</span>
<span class="t" style="left:1351.90px;top:504.00px;font-size:23.2px;line-height:23.2px;color:#fe9a00;letter-spacing:0.450px;font-weight:700;transform:scaleX(1.0336);transform-origin:0 0;">$18,292.85</span>
<span class="t" style="left:1351.04px;top:552.00px;font-size:18.4px;line-height:18.4px;color:#a3a3ab;letter-spacing:0.152px;-webkit-text-stroke:0.2px #a3a3ab;">Gross Profit</span>
<span class="t" style="left:1351.90px;top:579.00px;font-size:23.2px;line-height:23.2px;color:#51a2ff;letter-spacing:0.450px;font-weight:700;transform:scaleX(1.0373);transform-origin:0 0;">$31,946.64</span>
<span class="t" style="left:1596.26px;top:477.00px;font-size:18.4px;line-height:18.4px;color:#a3a3ab;letter-spacing:0.265px;-webkit-text-stroke:0.2px #a3a3ab;">Item Costs</span>
<span class="t" style="left:1597.70px;top:504.00px;font-size:23.2px;line-height:23.2px;color:#99a1af;letter-spacing:0.450px;font-weight:700;transform:scaleX(1.0829);transform-origin:0 0;">$44,072.42</span>
<span class="t" style="left:1596.26px;top:552.00px;font-size:18.4px;line-height:18.4px;color:#a3a3ab;letter-spacing:0.343px;-webkit-text-stroke:0.2px #a3a3ab;">Net Profit</span>
<span class="t" style="left:1597.70px;top:579.00px;font-size:23.2px;line-height:23.2px;color:#00c950;letter-spacing:0.450px;font-weight:700;transform:scaleX(1.0394);transform-origin:0 0;">$14,682.23</span>
<span class="t" style="left:1630.12px;top:425.00px;font-size:19px;line-height:19px;color:#fff;letter-spacing:-0.202px;-webkit-text-stroke:0.5px #fff;">Day</span>
<span class="t" style="left:1686.50px;top:425.00px;font-size:19px;line-height:19px;color:#a6a6b0;letter-spacing:-0.450px;transform:scaleX(0.9752);transform-origin:0 0;-webkit-text-stroke:0.4px #a6a6b0;">Week</span>
<span class="t" style="left:1754.02px;top:425.00px;font-size:19px;line-height:19px;color:#a6a6b0;letter-spacing:0.561px;-webkit-text-stroke:0.4px #a6a6b0;">Month</span>
<span class="t" style="left:1685.75px;top:19.00px;font-size:12.6px;line-height:12.6px;color:#fff;letter-spacing:0.000px;font-weight:700;">4</span>
</body></html>
